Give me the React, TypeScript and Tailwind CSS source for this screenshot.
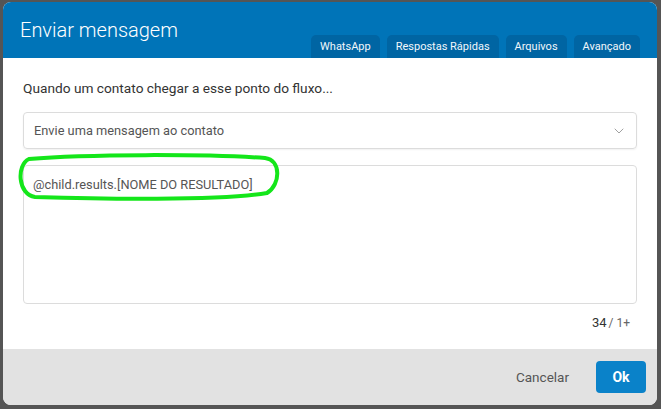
import { ChevronDown } from "lucide-react";

const tabs = ["WhatsApp", "Respostas Rápidas", "Arquivos", "Avançado"];

export default function App() {
  return (
    <div
      className="w-[661px] h-[409px] bg-[#555555] pt-[2px] pl-[3px] overflow-hidden"
      style={{ fontFamily: "Roboto, 'Liberation Sans', sans-serif" }}
    >
      <div className="w-[654px] h-[403px] bg-white rounded-[8px] overflow-hidden flex flex-col">
        {/* header */}
        <div className="h-[56px] bg-[#0074b8] flex items-end justify-between pl-[17px] pr-[17px] shrink-0">
          <h1 className="self-start mt-[16px] text-[20px] leading-[24px] text-white font-light">
            Enviar mensagem
          </h1>
          <div className="flex gap-[7px]">
            {tabs.map((t) => (
              <button
                key={t}
                className="h-[23px] px-[9px] rounded-t-[5px] bg-[#0065a3] text-[#f2f7fb] text-[11px] leading-[23px]"
              >
                {t}
              </button>
            ))}
          </div>
        </div>

        {/* body */}
        <div className="flex-1 px-5 pt-[22px] relative">
          <p className="text-[13.7px] leading-[16px] text-[#333]">
            Quando um contato chegar a esse ponto do fluxo...
          </p>

          <div className="mt-[16px] h-[37px] border border-[#dcdcdc] rounded-[4px] shadow-[0_1px_2px_rgba(0,0,0,0.06)] flex items-center justify-between pl-[10px] pr-[9px]">
            <span className="text-[12.8px] text-[#555]">Envie uma mensagem ao contato</span>
            <ChevronDown size={16} strokeWidth={1.5} className="text-[#a0a0a0]" />
          </div>

          <div className="mt-[16px] h-[139px] border border-[#dcdcdc] rounded-[4px] px-[9px] pt-[6px]">
            <span className="text-[12.8px] leading-[16px] text-[#555]">
              @child.results.[NOME DO RESULTADO]
            </span>
          </div>

          <div className="mt-[9px] pr-[7px] flex justify-end items-baseline gap-[2px]">
            <span className="text-[13px] text-[#333]">34</span>
            <span className="text-[12px] text-[#666]">/ 1+</span>
          </div>

          {/* hand-drawn highlight */}
          <svg
            className="absolute left-[12px] top-[94px] pointer-events-none"
            width="268"
            height="52"
            viewBox="0 0 268 52"
          >
            <path
              d="M14 7 C 70 2, 190 2, 250 6 C 266 8, 266 32, 252 41 C 204 49, 84 47, 20 45 C 3 43, 1 13, 14 7 Z"
              fill="none"
              stroke="#14e61a"
              strokeWidth="4"
              strokeLinecap="round"
            />
          </svg>
        </div>

        {/* footer */}
        <div className="h-[56px] bg-[#e2e2e2] flex items-center justify-end pr-[11px] gap-[27px] shrink-0">
          <button className="text-[13.5px] text-[#555]">Cancelar</button>
          <button className="w-[50px] h-[32px] rounded-[4px] bg-[#0a82c9] text-white text-[14px] font-bold">
            Ok
          </button>
        </div>
      </div>
    </div>
  );
}
